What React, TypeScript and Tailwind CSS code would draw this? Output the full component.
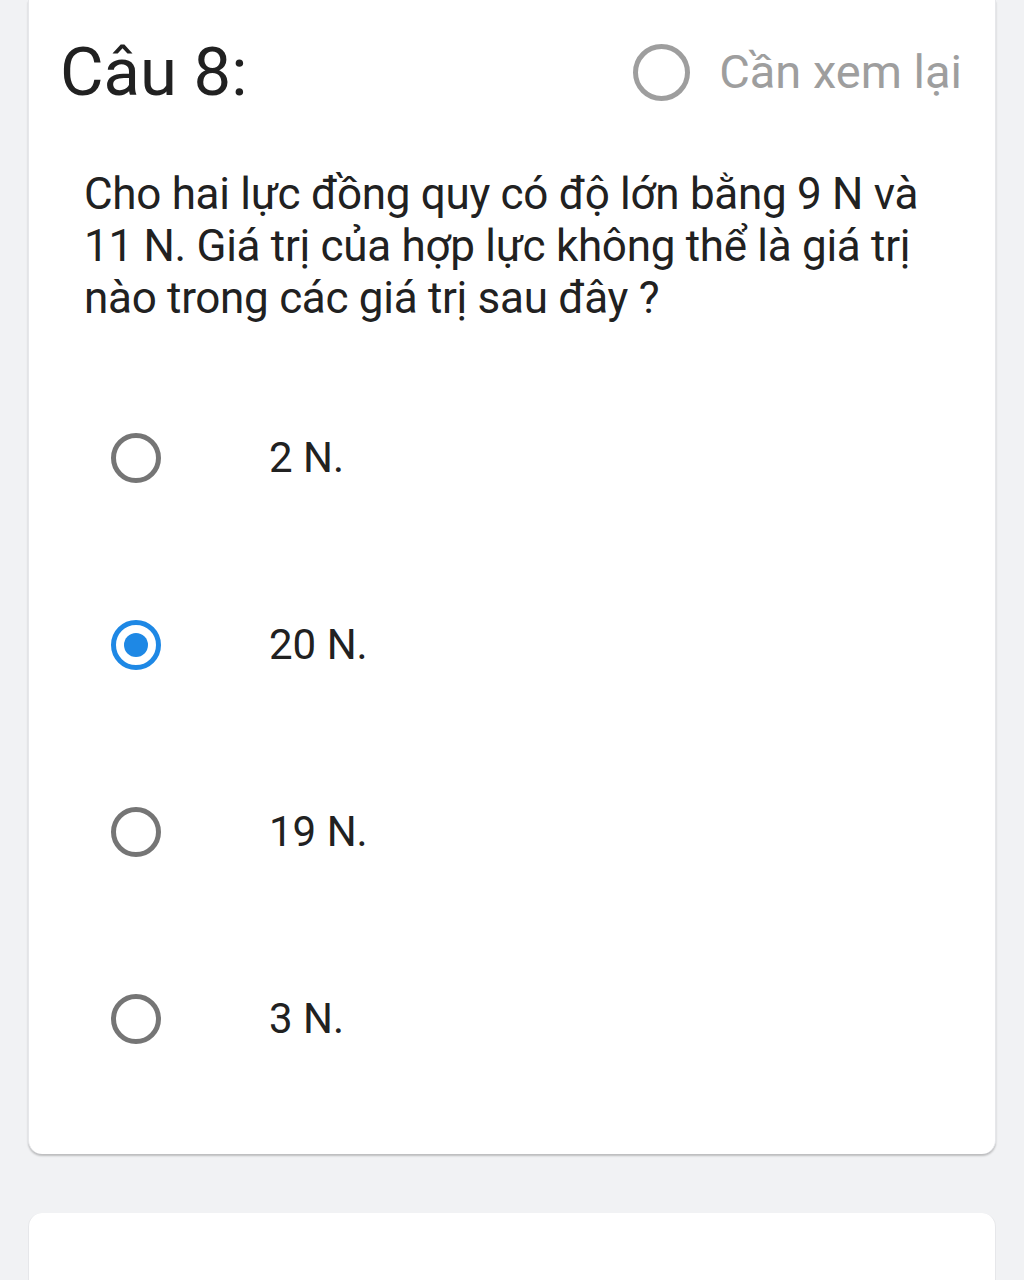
const options = [
  { id: "a", label: "2 N." },
  { id: "b", label: "20 N." },
  { id: "c", label: "19 N." },
  { id: "d", label: "3 N." },
];

const Radio = ({ checked }: { checked: boolean }) =>
  checked ? (
    <span className="w-[50px] h-[50px] rounded-full border-[5px] border-[#1e88e5] flex items-center justify-center shrink-0">
      <span className="w-[24px] h-[24px] rounded-full bg-[#1e88e5]" />
    </span>
  ) : (
    <span className="w-[50px] h-[50px] rounded-full border-[5px] border-[#757575] shrink-0" />
  );

const App = () => {
  const selected = "b";

  return (
    <div className="min-h-[1280px] bg-[#f1f2f4] px-[28px] font-['Roboto',sans-serif] text-[#212121]">
      <div className="bg-white rounded-b-[14px] border-x border-[#e6e7ea] shadow-[0_2px_2px_rgba(0,0,0,0.22)]">
        {/* header */}
        <div className="flex items-center justify-between pl-[31px] pr-[33px] pt-[34px] h-[110px]">
          <h2 className="text-[67px] leading-[76px] font-normal">Câu 8:</h2>
          <label className="flex items-center gap-[29px] text-[47px] leading-[76px] text-[#9e9e9e]">
            <span className="w-[57px] h-[57px] rounded-full border-[5px] border-[#9e9e9e]" />
            Cần xem lại
          </label>
        </div>

        {/* question */}
        <p className="mt-[58px] pl-[55px] pr-[58px] text-[44px] leading-[52px] tracking-[-0.3px]">
          Cho hai lực đồng quy có độ lớn bằng 9 N và 11 N. Giá trị của hợp lực không thể là giá trị nào trong các giá trị sau đây ?
        </p>

        {/* answers */}
        <div className="mt-[40px] pb-[42px]">
          {options.map((o) => (
            <div key={o.id} className="flex items-center h-[187px] pl-[82px]">
              <Radio checked={o.id === selected} />
              <span className="ml-[108px] text-[42px]">{o.label}</span>
            </div>
          ))}
        </div>
      </div>

      <div className="mt-[59px] bg-white rounded-t-[14px] border-x border-[#e6e7ea] h-[200px]" />
    </div>
  );
};

export default App;
